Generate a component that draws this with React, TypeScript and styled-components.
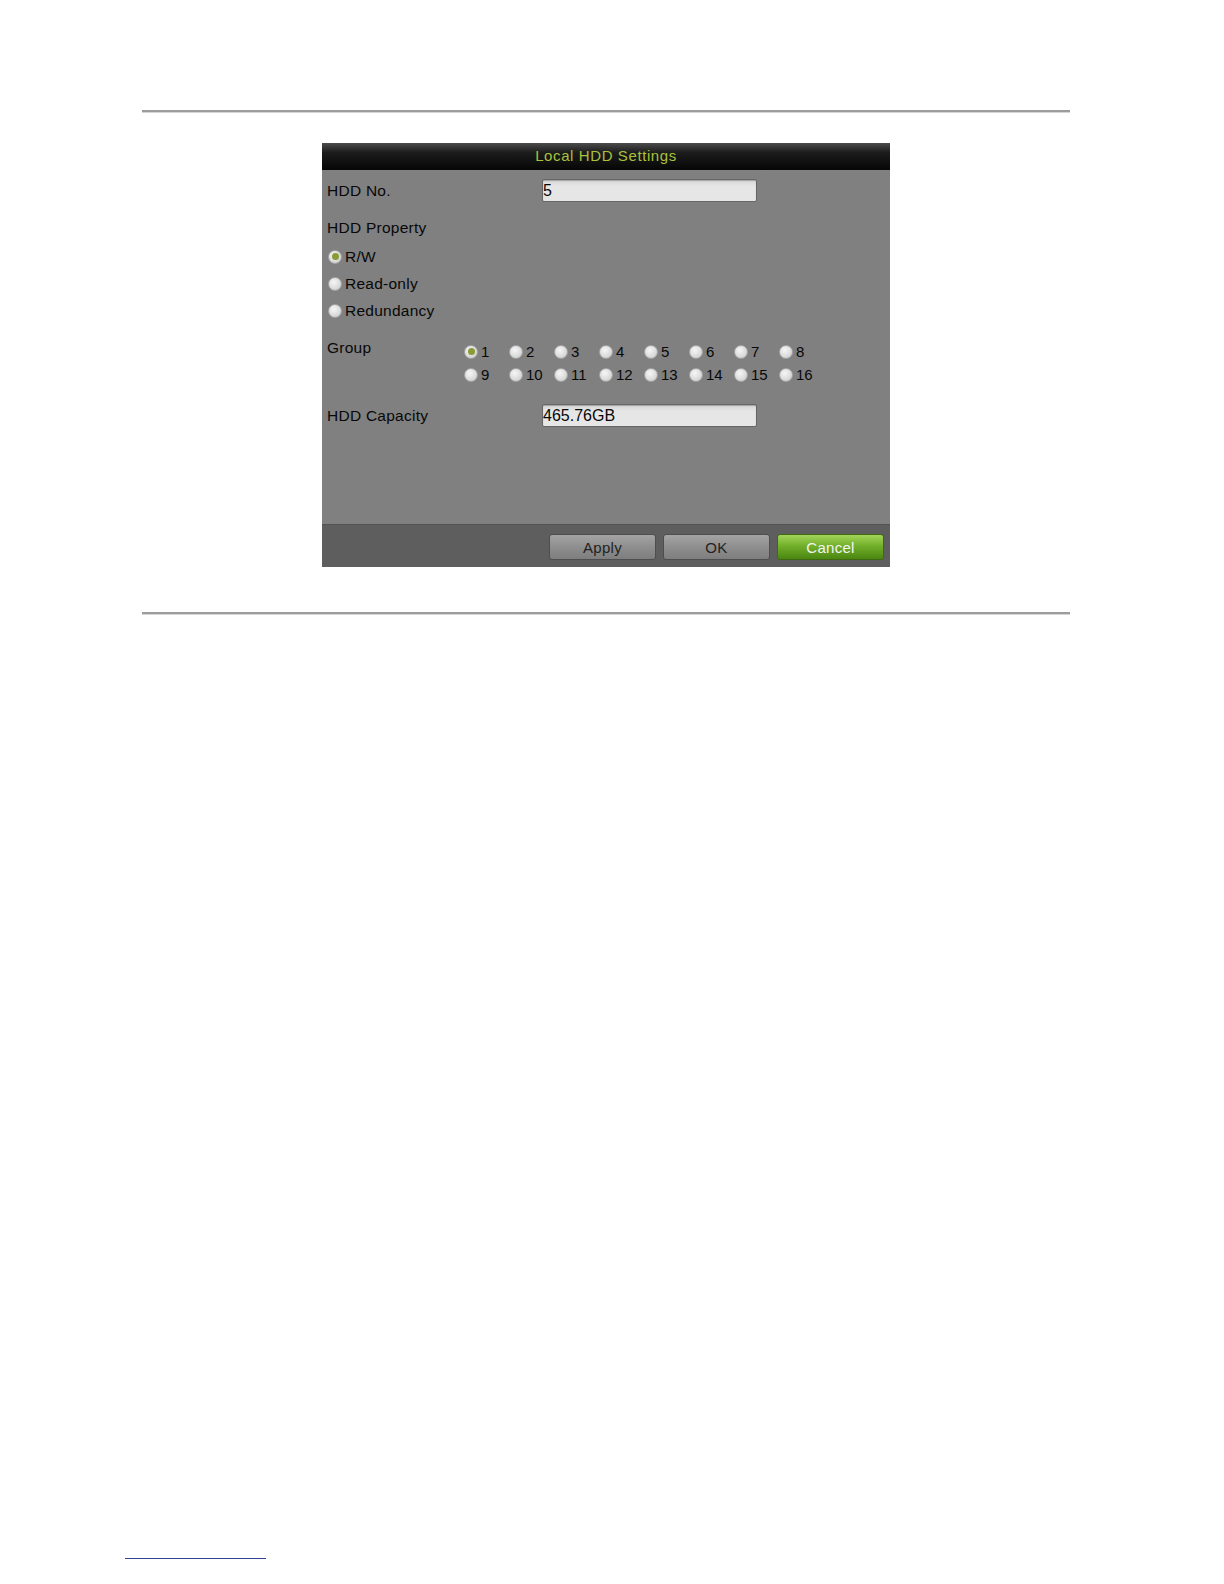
import React from "react";
import styled, { createGlobalStyle } from "styled-components";

const Global = createGlobalStyle`
  html, body { margin: 0; padding: 0; background: #ffffff; }
  body { font-family: "Liberation Sans", Arial, sans-serif; }
`;

const Page = styled.div`
  width: 1224px;
  height: 1584px;
  padding-top: 110px;
  box-sizing: border-box;
  display: flex;
  flex-direction: column;
  align-items: flex-start;
`;

const Rule = styled.div`
  margin-left: 142px;
  width: 928px;
  height: 2px;
  background: #9c9c9c;
  border-bottom: 1px solid #d6d6d6;
`;

const Figure = styled.div`
  margin: 30px 0 45px 322px;
`;

const Dialog = styled.div`
  width: 568px;
  height: 424px;
  display: flex;
  flex-direction: column;
  background: #808080;
`;

const TitleBar = styled.div`
  height: 27px;
  background: linear-gradient(#4c4c4c 0%, #1c1c1c 35%, #060606 100%);
  color: #a9c23c;
  font-size: 15px;
  letter-spacing: 0.6px;
  display: flex;
  align-items: center;
  justify-content: center;
  padding-bottom: 2px;
  box-sizing: border-box;
`;

const Body = styled.div`
  flex: 1;
  padding: 9px 0 0 5px;
  display: flex;
  flex-direction: column;
`;

const Label = styled.div`
  font-size: 15.5px;
  letter-spacing: 0.25px;
  color: #080808;
`;

const FieldRow = styled.div<{ $mt?: number }>`
  display: flex;
  align-items: center;
  height: 23px;
  margin-top: ${(p) => p.$mt ?? 0}px;
  ${Label} { width: 215px; }
`;

const Input = styled.div`
  width: 215px;
  height: 23px;
  box-sizing: border-box;
  background: linear-gradient(#d6d6d6, #e6e6e6 30%, #e6e6e6);
  border: 1px solid #666;
  border-radius: 2px;
  box-shadow: inset 0 1px 1px rgba(0, 0, 0, 0.25);
  font-size: 16px;
  color: #080808;
  display: flex;
  align-items: center;
`;

const SectionTitle = styled(Label)`
  height: 20px;
  line-height: 20px;
  margin-top: 16px;
  margin-bottom: 5px;
`;

const RadioRow = styled.label`
  display: flex;
  align-items: center;
  height: 27px;
  gap: 3px;
  padding-left: 1px;
`;

const Radio = styled.span<{ $on?: boolean }>`
  width: 14px;
  height: 14px;
  border-radius: 50%;
  box-sizing: border-box;
  background: radial-gradient(circle at 40% 35%, #f6f6f6, #d8d8d8 65%, #bcbcbc);
  border: 1px solid #a4a4a4;
  display: inline-flex;
  align-items: center;
  justify-content: center;
  flex: none;
  &::after {
    content: "";
    width: 7px;
    height: 7px;
    border-radius: 50%;
    background: ${(p) => (p.$on ? "#8a9a34" : "transparent")};
  }
`;

const GroupSection = styled.div`
  display: flex;
  margin-top: 16px;
  ${Label} {
    width: 137px;
    line-height: 16px;
    height: 16px;
  }
`;

const GroupGrid = styled.div`
  display: grid;
  grid-template-columns: repeat(8, 45px);
  grid-auto-rows: 23px;
`;

const GroupItem = styled.label`
  display: flex;
  align-items: center;
  gap: 3px;
  font-size: 15px;
  color: #080808;
`;

const Footer = styled.div`
  height: 43px;
  box-sizing: border-box;
  background: #5e5e5e;
  border-top: 1px solid #535353;
  display: flex;
  justify-content: flex-end;
  align-items: flex-start;
  gap: 7px;
  padding: 9px 6px 0 0;
`;

const Button = styled.div<{ $primary?: boolean }>`
  width: 107px;
  height: 26px;
  box-sizing: border-box;
  border-radius: 3px;
  border: 1px solid ${(p) => (p.$primary ? "#3f6a12" : "#4e4e4e")};
  background: ${(p) =>
    p.$primary
      ? "linear-gradient(#a2d45a 0%, #72b02a 45%, #4a8612 100%)"
      : "linear-gradient(#a4a4a4 0%, #8e8e8e 50%, #7e7e7e 100%)"};
  color: ${(p) => (p.$primary ? "#f4f4f4" : "#222")};
  font-size: 15px;
  letter-spacing: 0.3px;
  display: flex;
  align-items: center;
  justify-content: center;
  padding-top: 1px;
`;

const Footnote = styled.div`
  margin-top: auto;
  margin-bottom: 25px;
  margin-left: 125px;
  width: 141px;
  height: 1px;
  background: #31428f;
`;

export default function App() {
  const groups = Array.from({ length: 16 }, (_, i) => i + 1);
  return (
    <Page>
      <Global />
      <Rule />
      <Figure>
        <Dialog>
          <TitleBar>Local HDD Settings</TitleBar>
          <Body>
            <FieldRow>
              <Label>HDD No.</Label>
              <Input>5</Input>
            </FieldRow>
            <SectionTitle>HDD Property</SectionTitle>
            <RadioRow>
              <Radio $on />
              <Label>R/W</Label>
            </RadioRow>
            <RadioRow>
              <Radio />
              <Label>Read-only</Label>
            </RadioRow>
            <RadioRow>
              <Radio />
              <Label>Redundancy</Label>
            </RadioRow>
            <GroupSection>
              <Label>Group</Label>
              <GroupGrid>
                {groups.map((g) => (
                  <GroupItem key={g}>
                    <Radio $on={g === 1} />
                    {g}
                  </GroupItem>
                ))}
              </GroupGrid>
            </GroupSection>
            <FieldRow $mt={18}>
              <Label>HDD Capacity</Label>
              <Input>465.76GB</Input>
            </FieldRow>
          </Body>
          <Footer>
            <Button>Apply</Button>
            <Button>OK</Button>
            <Button $primary>Cancel</Button>
          </Footer>
        </Dialog>
      </Figure>
      <Rule />
      <Footnote />
    </Page>
  );
}
